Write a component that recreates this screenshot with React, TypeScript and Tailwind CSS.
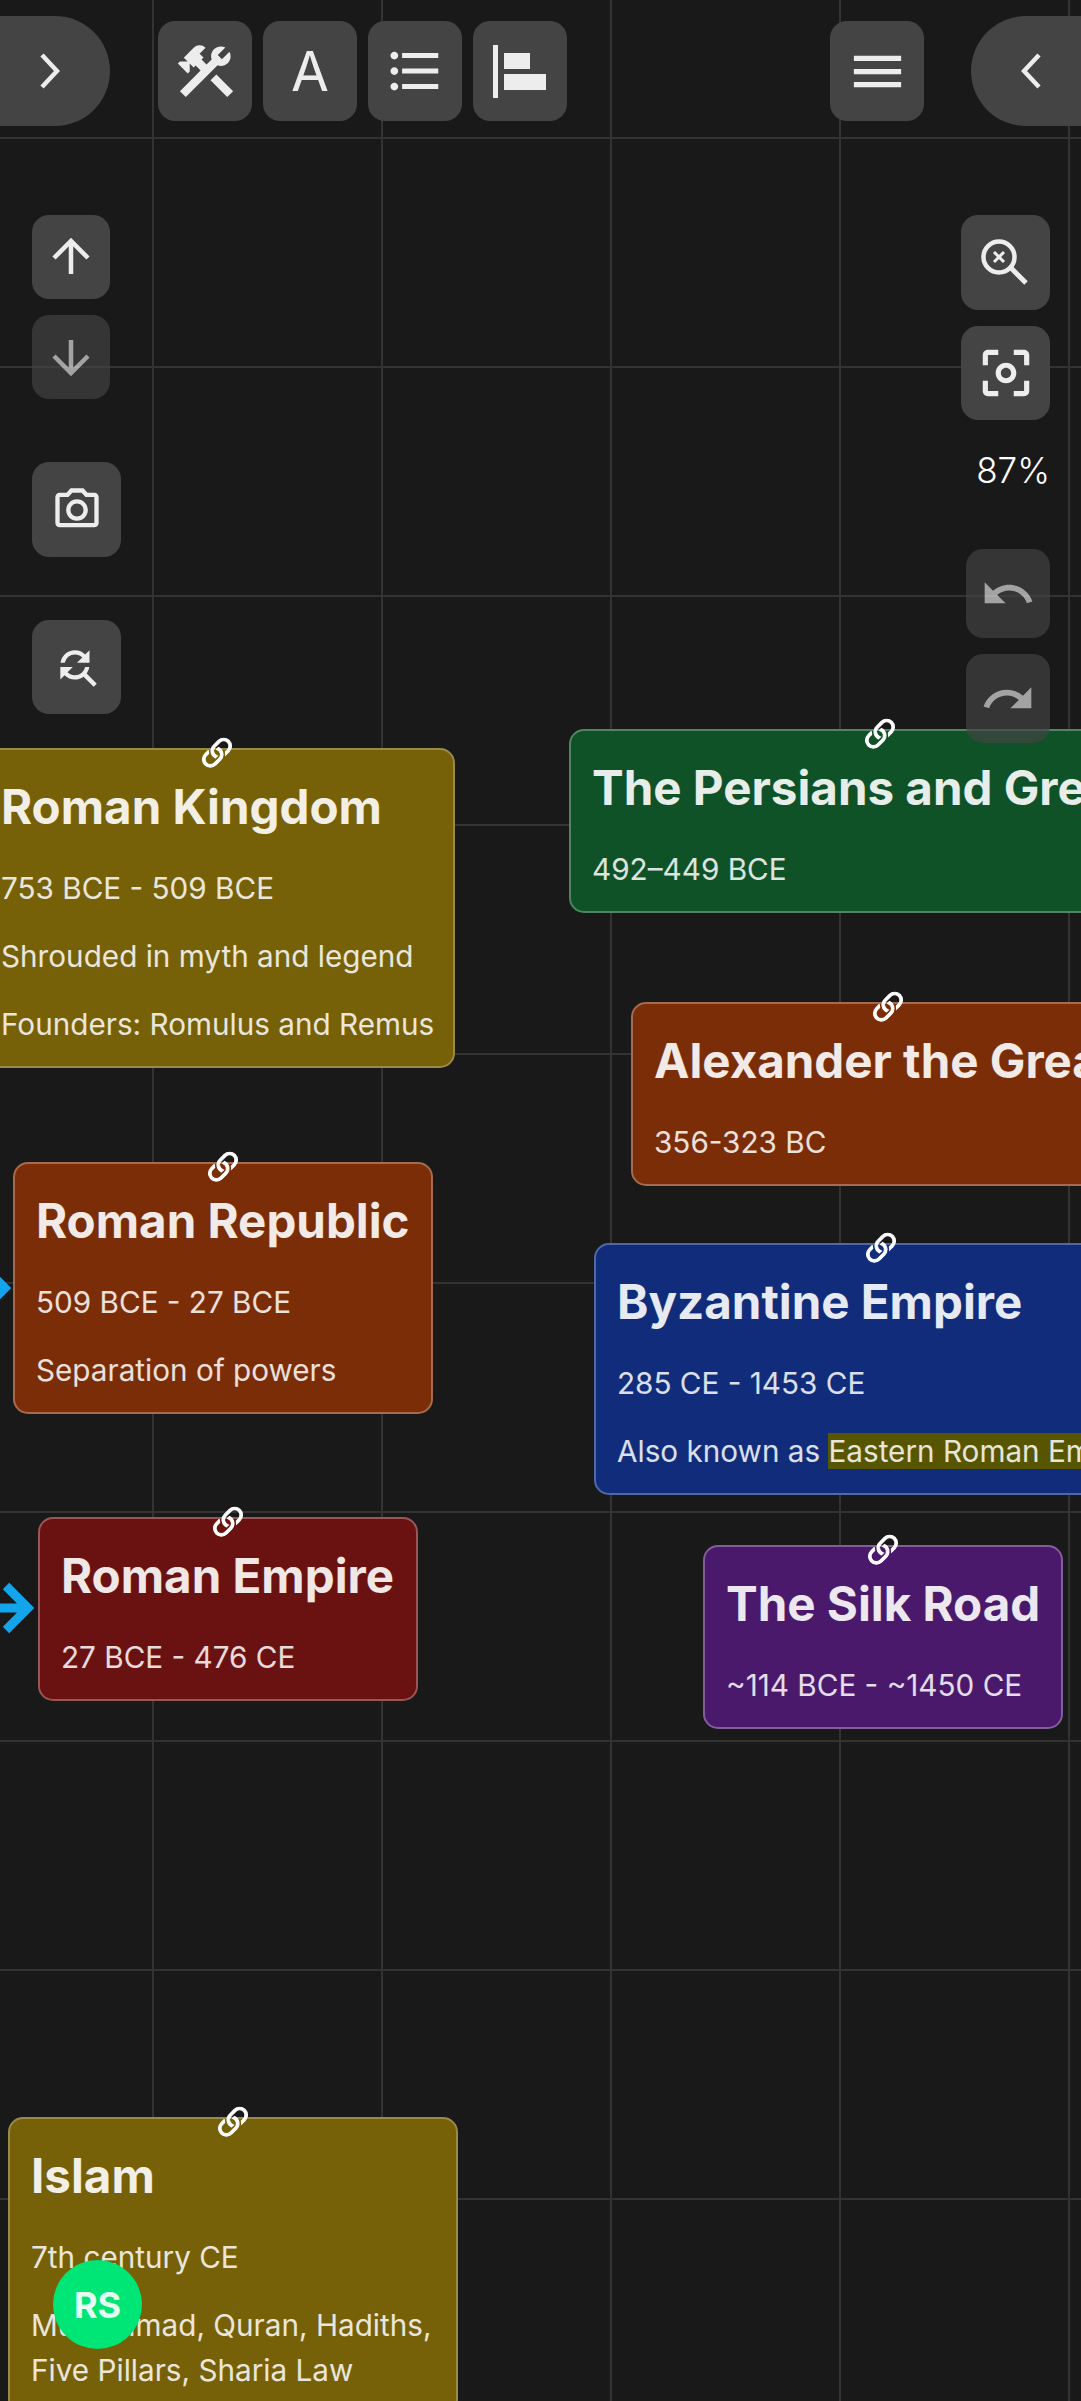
import {
  MdConstruction,
  MdFormatListBulleted,
  MdMenu,
  MdOutlineCenterFocusWeak,
  MdOutlineFindReplace,
  MdOutlinePhotoCamera,
  MdRedo,
  MdUndo,
} from 'react-icons/md';
import { BsLink45Deg } from 'react-icons/bs';

type NodeData = {
  title: string;
  lines: React.ReactNode[];
  box: string;
};

const nodes: NodeData[] = [
  {
    title: 'Roman Kingdom',
    lines: ['753 BCE - 509 BCE', 'Shrouded in myth and legend', 'Founders: Romulus and Remus'],
    box: 'left-[-22px] top-[748px] w-[477px] bg-[#766008] border-[#9a8a48]',
  },
  {
    title: 'The Persians and Greeks',
    lines: ['492–449 BCE'],
    box: 'left-[569px] top-[729px] w-[621px] bg-[#0f5228] border-[#4f8563]',
  },
  {
    title: 'Alexander the Great',
    lines: ['356-323 BC'],
    box: 'left-[631px] top-[1002px] w-[514px] bg-[#7a2d07] border-[#a66b4d]',
  },
  {
    title: 'Roman Republic',
    lines: ['509 BCE - 27 BCE', 'Separation of powers'],
    box: 'left-[13px] top-[1162px] w-[420px] bg-[#7a2d07] border-[#a66b4d]',
  },
  {
    title: 'Byzantine Empire',
    lines: [
      '285 CE - 1453 CE',
      <>
        Also known as <span className="bg-[#575500]">Eastern Roman Empire</span>
      </>,
    ],
    box: 'left-[594px] top-[1243px] w-[573px] bg-[#102c7a] border-[#4f68a6]',
  },
  {
    title: 'Roman Empire',
    lines: ['27 BCE - 476 CE'],
    box: 'left-[38px] top-[1517px] w-[380px] bg-[#6a1212] border-[#985656]',
  },
  {
    title: 'The Silk Road',
    lines: ['~114 BCE - ~1450 CE'],
    box: 'left-[703px] top-[1545px] w-[360px] bg-[#4a196c] border-[#805e9a]',
  },
  {
    title: 'Islam',
    lines: ['7th century CE', 'Muhammad, Quran, Hadiths, Five Pillars, Sharia Law'],
    box: 'left-[8px] top-[2117px] w-[450px] bg-[#766008] border-[#9a8a48]',
  },
];

function TimelineNode({ title, lines, box }: NodeData) {
  return (
    <div className={`absolute rounded-[15px] border-2 px-[21px] pt-[20px] pb-[19px] text-white/90 ${box}`}>
      <BsLink45Deg
        size={42}
        stroke="currentColor"
        strokeWidth={0.4}
        className="absolute left-1/2 top-[-17px] -translate-x-1/2 text-white"
      />
      <h2 className="mb-[23px] whitespace-nowrap text-[47.5px] leading-[73px] font-bold">{title}</h2>
      <div className="flex flex-col gap-[23px] text-[29.7px] leading-[45px] text-white/85">
        {lines.map((line, i) => (
          <p key={i} className={title === 'Islam' ? '' : 'whitespace-nowrap'}>
            {line}
          </p>
        ))}
      </div>
    </div>
  );
}

function BlueArrow({ className }: { className: string }) {
  return (
    <svg viewBox="0 0 36 52" className={`absolute h-[52px] w-[36px] ${className}`}>
      <path d="M0 26H30M8 4L30 26L8 48" fill="none" stroke="#12a5ec" strokeWidth="9" />
    </svg>
  );
}

function ToolButton({ className, children }: { className: string; children: React.ReactNode }) {
  return (
    <div className={`flex shrink-0 items-center justify-center rounded-[17px] bg-[#444444] text-[#ededed] ${className}`}>
      {children}
    </div>
  );
}

export default function App() {
  return (
    <div className="relative h-[2401px] w-[1081px] overflow-hidden bg-[#191919] bg-[linear-gradient(to_right,#333333_2px,transparent_2px),linear-gradient(to_bottom,#333333_2px,transparent_2px)] bg-[size:229px_229px] bg-[position:152px_137px] font-['Inter',sans-serif]">
      <BlueArrow className="left-[-25px] top-[1262px]" />
      <BlueArrow className="left-[-2px] top-[1582px]" />

      {nodes.map((node) => (
        <TimelineNode key={node.title} {...node} />
      ))}

      {/* top toolbar */}
      <div className="absolute left-0 top-[16px] flex h-[110px] w-[1081px] items-center">
        <div className="ml-[-40px] flex h-[110px] w-[150px] shrink-0 items-center justify-center rounded-r-[55px] bg-[#444444] pl-[30px] text-[#ededed]">
          <svg viewBox="0 0 20 36" className="h-[36px] w-[20px]">
            <path d="M2 2L17 18L2 34" fill="none" stroke="currentColor" strokeWidth="4.5" />
          </svg>
        </div>
        <div className="ml-[48px] flex shrink-0 gap-[11px]">
          <ToolButton className="h-[100px] w-[94px]">
            <MdConstruction size={67} />
          </ToolButton>
          <ToolButton className="h-[100px] w-[94px] text-[55px]">A</ToolButton>
          <ToolButton className="h-[100px] w-[94px]">
            <MdFormatListBulleted size={62} />
          </ToolButton>
          <ToolButton className="h-[100px] w-[94px]">
            <svg viewBox="0 0 54 54" className="h-[54px] w-[54px] fill-current">
              <rect x="0" y="1" width="5" height="53" />
              <rect x="11" y="9" width="26" height="16" />
              <rect x="11" y="30" width="42" height="16" />
            </svg>
          </ToolButton>
        </div>
        <ToolButton className="ml-[263px] h-[100px] w-[94px]">
          <MdMenu size={63} />
        </ToolButton>
        <div className="ml-[47px] flex h-[110px] w-[150px] shrink-0 items-center justify-center rounded-l-[55px] bg-[#444444] pr-[30px] text-[#ededed]">
          <svg viewBox="0 0 20 36" className="h-[36px] w-[20px]">
            <path d="M18 2L3 18L18 34" fill="none" stroke="currentColor" strokeWidth="4.5" />
          </svg>
        </div>
      </div>

      {/* left controls */}
      <div className="absolute left-[32px] top-[215px] flex flex-col">
        <ToolButton className="h-[84px] w-[78px]">
          <svg viewBox="0 0 40 40" className="h-[40px] w-[40px]">
            <path d="M20 37V3M3 21L20 4L37 21" fill="none" stroke="currentColor" strokeWidth="4.5" />
          </svg>
        </ToolButton>
        <ToolButton className="mt-[16px] h-[84px] w-[78px] opacity-65">
          <svg viewBox="0 0 40 40" className="h-[40px] w-[40px]">
            <path d="M20 3V37M3 19L20 36L37 19" fill="none" stroke="currentColor" strokeWidth="4.5" />
          </svg>
        </ToolButton>
        <ToolButton className="mt-[63px] h-[95px] w-[89px]">
          <MdOutlinePhotoCamera size={52} />
        </ToolButton>
        <ToolButton className="mt-[63px] h-[94px] w-[89px]">
          <MdOutlineFindReplace size={50} />
        </ToolButton>
      </div>

      {/* right controls */}
      <div className="absolute right-[31px] top-[215px] flex flex-col items-end">
        <ToolButton className="h-[95px] w-[89px]">
          <svg viewBox="0 0 52 52" className="ml-[-3px] h-[52px] w-[52px]">
            <circle cx="21" cy="20" r="15.5" fill="none" stroke="currentColor" strokeWidth="4.5" />
            <path d="M33 31L48 46" stroke="currentColor" strokeWidth="5" />
            <path d="M16 15L26 25M26 15L16 25" stroke="currentColor" strokeWidth="3" />
          </svg>
        </ToolButton>
        <ToolButton className="mt-[16px] h-[94px] w-[89px]">
          <MdOutlineCenterFocusWeak size={62} />
        </ToolButton>
        <p className="mt-[33px] h-[34px] text-[35px] leading-[34px] font-light text-white">87%</p>
        <ToolButton className="mt-[62px] h-[89px] w-[84px] opacity-65">
          <MdUndo size={56} />
        </ToolButton>
        <ToolButton className="mt-[16px] h-[89px] w-[84px] opacity-65">
          <MdRedo size={56} />
        </ToolButton>
      </div>

      <div className="absolute left-[53px] top-[2260px] flex h-[89px] w-[89px] items-center justify-center rounded-full bg-[#00e676] text-[36px] font-bold text-white/90">
        RS
      </div>
    </div>
  );
}
